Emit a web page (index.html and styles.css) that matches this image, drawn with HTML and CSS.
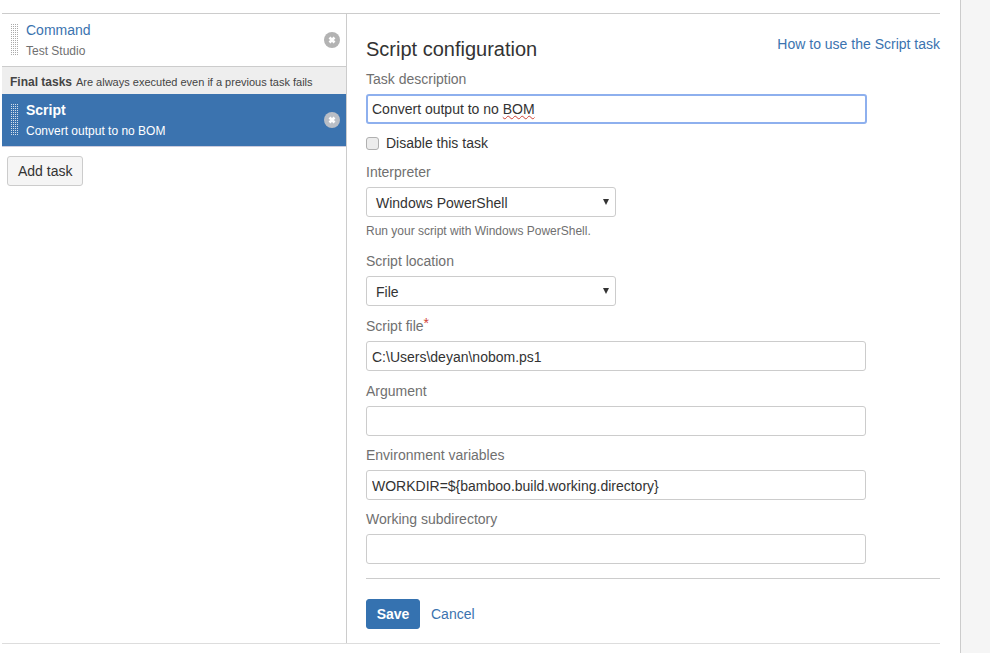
FILE: index.html
```html
<!DOCTYPE html>
<html lang="en">
<head>
<meta charset="utf-8">
<title>Script configuration</title>
<link rel="stylesheet" href="styles.css">
</head>
<body>
<div class="page">
  <main class="main">
    <div class="frame">
      <section class="tasks">
        <div class="task">
          <span class="handle"></span>
          <div class="task-text">
            <a class="task-name" href="#">Command</a>
            <div class="task-desc">Test Studio</div>
          </div>
          <span class="remove"><svg viewBox="0 0 16 16" width="16" height="16"><circle cx="8" cy="8" r="8" fill="#b3b3b3"/><path d="M5.5 5.5l5 5M10.5 5.5l-5 5" stroke="#fff" stroke-width="2.6"/></svg></span>
        </div>
        <div class="final-head"><b>Final tasks</b> <span>Are always executed even if a previous task fails</span></div>
        <div class="task task-active">
          <span class="handle"></span>
          <div class="task-text">
            <a class="task-name" href="#">Script</a>
            <div class="task-desc">Convert output to no BOM</div>
          </div>
          <span class="remove"><svg viewBox="0 0 16 16" width="16" height="16"><circle cx="8" cy="8" r="8" fill="#b9bec6"/><path d="M5.5 5.5l5 5M10.5 5.5l-5 5" stroke="#fff" stroke-width="2.6"/></svg></span>
        </div>
        <button class="btn add-task" type="button">Add task</button>
      </section>
      <section class="config">
        <div class="config-head">
          <h2>Script configuration</h2>
          <a href="#">How to use the Script task</a>
        </div>
        <div class="field first">
          <label>Task description</label>
          <div class="text focus">Convert output to no <span class="typo">BOM</span></div>
        </div>
        <label class="check"><input type="checkbox"><span>Disable this task</span></label>
        <div class="field">
          <label>Interpreter</label>
          <div class="select"><span>Windows PowerShell</span><i></i></div>
          <div class="help">Run your script with Windows PowerShell.</div>
        </div>
        <div class="field">
          <label>Script location</label>
          <div class="select"><span>File</span><i></i></div>
        </div>
        <div class="field">
          <label>Script file<sup>*</sup></label>
          <input class="text" type="text" value="C:\Users\deyan\nobom.ps1">
        </div>
        <div class="field">
          <label>Argument</label>
          <input class="text" type="text">
        </div>
        <div class="field tight">
          <label>Environment variables</label>
          <input class="text" type="text" value="WORKDIR=${bamboo.build.working.directory}">
        </div>
        <div class="field tight">
          <label>Working subdirectory</label>
          <input class="text" type="text">
        </div>
        <div class="actions">
          <button class="btn save" type="button">Save</button>
          <a href="#">Cancel</a>
        </div>
      </section>
    </div>
  </main>
  <aside class="side"></aside>
</div>
</body>
</html>
```
FILE: styles.css
```css
* { box-sizing: border-box; }
html, body { margin: 0; height: 100%; background: #fff; }
body { font-family: "Liberation Sans", Arial, sans-serif; font-size: 14px; line-height: 20px; color: #333; overflow: hidden; }
a { color: #3b73af; text-decoration: none; }
.page { display: flex; height: 653px; }
.main { width: 961px; padding: 13px 20px 9px 2px; border-right: 1px solid #ccc; }
.side { flex: 1; background: #f5f5f5; }
.frame { display: flex; height: 631px; border-top: 1px solid #ccc; border-bottom: 1px solid #ddd; }
.tasks { width: 345px; border-right: 1px solid #ccc; }
.task { display: flex; align-items: center; height: 53px; padding: 0 6px 0 8px; border-bottom: 1px solid #ccc; }
.handle { width: 8px; height: 32px; background: conic-gradient(#aaa 25%, transparent 0) 0 0 / 2px 2px; }
.task-text { flex: 1; padding-left: 8px; }
.task-name { display: block; line-height: 20px; }
.task-desc { margin-top: 1px; font-size: 12px; line-height: 20px; color: #707070; }
.remove { display: flex; }
.final-head { height: 27px; padding: 4px 8px 0; background: #eee; line-height: 20px; color: #444; }
.final-head b { font-size: 12px; }
.final-head span { font-size: 11px; }
.task-active { background: #3b73af; color: #fff; border-bottom-color: #ccd; }
.task-active .task-name { color: #fff; font-weight: bold; }
.task-active .task-desc { color: #fff; }
.task-active .handle { background-image: conic-gradient(#d5e0ec 25%, transparent 0); }
.btn { font-family: inherit; font-size: 14px; height: 30px; padding: 0 10px; border-radius: 3px; border: 1px solid #ccc; background: #f5f5f5; color: #333; white-space: nowrap; }
.add-task { display: block; margin: 9px 0 0 5px; width: 76px; }
.config { flex: 1; padding: 0 0 0 19px; }
.config-head { display: flex; justify-content: space-between; height: 55px; }
.config-head h2 { margin: 23px 0 0; font-size: 20px; line-height: 24px; font-weight: normal; color: #333; }
.config-head a { margin-top: 20px; height: 20px; }
.field { margin-top: 10px; display: flex; flex-direction: column; align-items: flex-start; }
.field.first { margin-top: 0; }
.field.tight { margin-top: 9px; }
.field label { line-height: 20px; margin-bottom: 5px; color: #707070; }
.field sup { color: #d04437; font-size: 14px; line-height: 0; vertical-align: 3px; }
.text { display: block; width: 500px; height: 30px; padding: 2px 5px 0; border: 1px solid #ccc; border-radius: 3px; background: #fff; font-family: inherit; font-size: 14px; line-height: 20px; color: #333; outline: 0; }
.text.focus { width: 501px; border: 2px solid #8eb0ee; padding: 0 4px; line-height: 26px; }
.typo { text-decoration: underline wavy #d04437 1px; }
.check { display: flex; align-items: center; height: 18px; margin-top: 10px; }
.check input { appearance: none; width: 13px; height: 13px; margin: 0 7px 0 0; background: #ececec; border: 1px solid #b0b0b0; border-radius: 3px; }
.select { position: relative; display: flex; align-items: center; width: 250px; height: 30px; padding: 1px 9px 0; border: 1px solid #ccc; border-radius: 3px; background: #fff; }
.select i { position: absolute; right: 6px; top: 11px; border-style: solid; border-width: 6px 3px 0; border-color: #333 transparent transparent; }
.help { margin-top: 6px; height: 18px; font-size: 12px; line-height: 16px; color: #707070; }
.actions { display: flex; align-items: center; gap: 11px; margin-top: 14px; padding-top: 20px; border-top: 1px solid #ccc; }
.save { width: 54px; padding: 0; background: #3572b0; border-color: #3572b0; color: #fff; font-weight: bold; }
```
